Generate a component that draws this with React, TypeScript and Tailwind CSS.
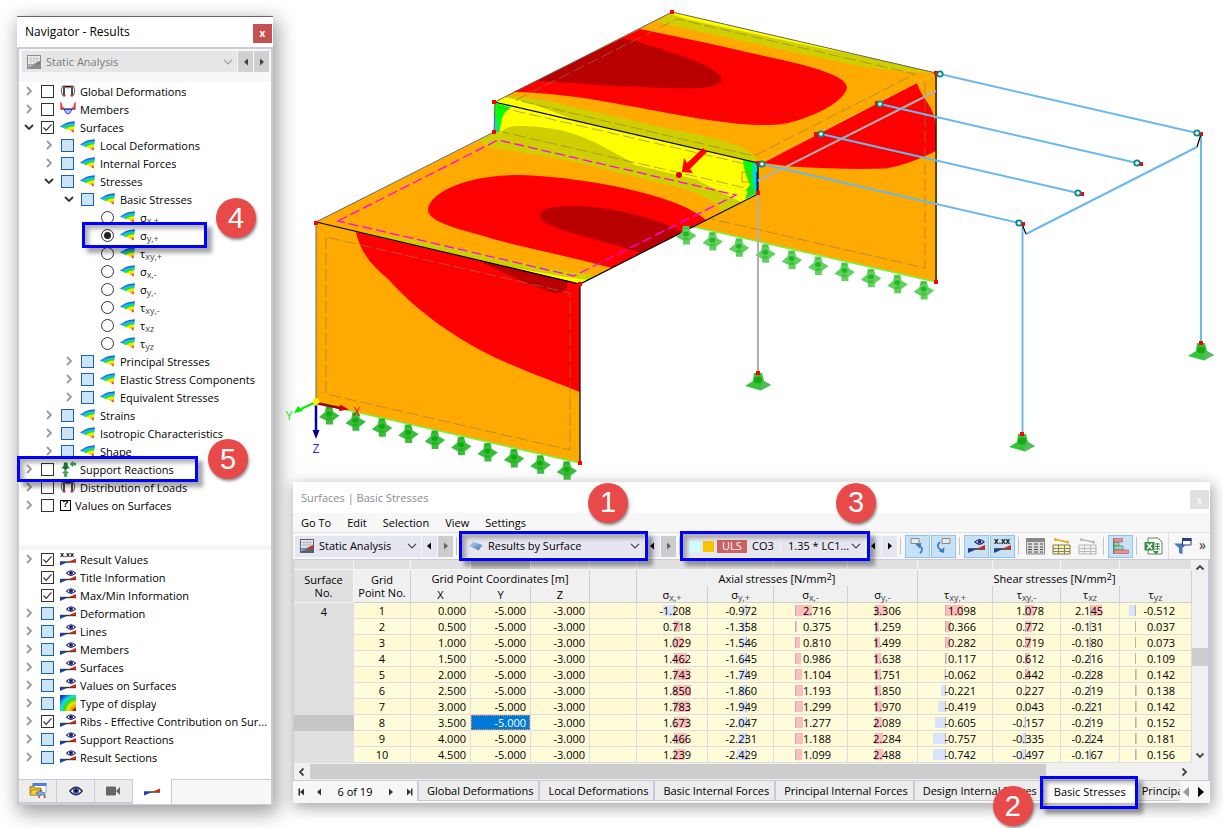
import React from "react";

type Glyph =
  | "frame"
  | "moment"
  | "surface"
  | "support"
  | "question"
  | "values"
  | "eye"
  | "contour";

interface TreeItem {
  id: string;
  label: React.ReactNode;
  depth: number;
  glyph: Glyph;
  control: "empty" | "checked" | "mixed" | "radio" | "radio-on";
  expander?: "open" | "closed";
  callout?: React.ReactNode;
}

const INDENT = ["pl-0", "pl-5", "pl-10", "pl-15"];

function Sym({ base, sub }: { base: string; sub: string }) {
  return (
    <span>
      {base}
      <span className="relative top-0.5 text-[9px] leading-none text-[#444]">{sub}</span>
    </span>
  );
}

function Badge({ n, className }: { n: number; className: string }) {
  return (
    <span
      className={`pointer-events-none absolute z-20 flex size-10 items-center justify-center rounded-full bg-[#e84a4a] font-['Liberation_Sans',sans-serif] text-[29px] leading-none text-white shadow-[1px_2px_3px_rgba(0,0,0,0.45)] ${className}`}
    >
      {n}
    </span>
  );
}

function Highlight({ className }: { className: string }) {
  return (
    <span
      className={`pointer-events-none absolute z-10 border-3 border-[#0000ff] shadow-[5px_5px_4px_rgba(0,0,0,0.35),inset_4px_4px_4px_rgba(0,0,0,0.3)] ${className}`}
    />
  );
}

function Defs() {
  return (
    <svg className="absolute size-0" aria-hidden="true">
      <defs>
        <radialGradient
          id="wedge"
          gradientUnits="userSpaceOnUse"
          cx="0"
          cy="0"
          r="11"
          gradientTransform="translate(14 13) scale(1.700 1)"
        >
          <stop offset="0.08" stopColor="#d01000" />
          <stop offset="0.18" stopColor="#ff9000" />
          <stop offset="0.32" stopColor="#ffe800" />
          <stop offset="0.46" stopColor="#e0f000" />
          <stop offset="0.56" stopColor="#20dc30" />
          <stop offset="0.72" stopColor="#10c8f0" />
          <stop offset="0.84" stopColor="#1088e8" />
          <stop offset="0.96" stopColor="#1020a8" />
        </radialGradient>
        <radialGradient id="iso" gradientUnits="userSpaceOnUse" cx="16" cy="16" r="20">
          <stop offset="0.1" stopColor="#c01000" />
          <stop offset="0.22" stopColor="#f0a000" />
          <stop offset="0.42" stopColor="#f0e800" />
          <stop offset="0.58" stopColor="#30d820" />
          <stop offset="0.76" stopColor="#10e0f0" />
          <stop offset="1" stopColor="#1040c0" />
        </radialGradient>
        <linearGradient id="slab" x1="0" y1="0" x2="1" y2="1">
          <stop offset="0" stopColor="#b8dcf4" />
          <stop offset="1" stopColor="#3c74b0" />
        </linearGradient>
      </defs>
    </svg>
  );
}

function DiagramLine({ y }: { y: number }) {
  return (
    <g>
      <path d={`M0 ${y}h16`} stroke="#333" strokeWidth="1.4" />
      <path d={`M0 ${y}h8l-8 3.5z`} fill="#1c3fa8" />
      <path d={`M16 ${y}h-8l8-3.5z`} fill="#d42a14" />
    </g>
  );
}

function Eye() {
  return (
    <g>
      <path d="M6.500 4.200q4.500-4.800 9 0q-4.500 4.200-9 0z" fill="#fff" stroke="#232a66" strokeWidth="1.100" />
      <circle cx="11" cy="4" r="2.100" fill="#2b3590" />
      <circle cx="11" cy="3.800" r="0.800" fill="#0a0a20" />
    </g>
  );
}

function TreeGlyph({ kind }: { kind: Glyph }) {
  if (kind === "question") {
    return (
      <span className="flex size-[11px] shrink-0 items-center justify-center border border-black bg-white font-['Liberation_Mono',monospace] text-[10px] leading-none font-bold">
        ?
      </span>
    );
  }
  return (
    <svg width="16" height="16" viewBox="0 0 16 16" className="shrink-0" fill="none" aria-hidden="true">
      {kind === "surface" && <path d="M0 7.500 6 4q4-1.800 9-1.500L13.500 13.500l-3-2-5-1.500z" fill="url(#wedge)" />}
      {kind === "frame" && (
        <>
          <path d="M4 12.500V3.500h8v9" stroke="#111" strokeWidth="1.500" />
          <path d="M4 4q4 2 8 0" stroke="#777" />
          <path d="M2.500 3Q0 7.500 2.500 12.500M13.500 3q2.500 4.500 0 9.500" stroke="#555" />
          <path d="M3 11.500h2.500v2H3zM10.500 11.500H13v2h-2.500zM3 2.500h2v2H3zM11 2.500h2v2h-2z" fill="#d23030" />
        </>
      )}
      {kind === "moment" && (
        <>
          <path d="M0.500 8h15" stroke="#555" strokeWidth="1.500" />
          <path d="M4 8.500q4 9 8 0z" fill="#b8c4ff" stroke="#2c3cff" />
          <path d="M0.800 7.500V1.500q1 4.500 3.200 6zM15.200 7.500V1.500q-1 4.500-3.200 6z" fill="#ff6060" stroke="#f02020" strokeWidth="0.800" />
        </>
      )}
      {kind === "support" && (
        <>
          <path d="M4 1.500h3.500L8 5l2 2.500H1L3.500 5z" fill="#1d7a3a" />
          <circle cx="5.500" cy="7.500" r="1.500" fill="#1f5f30" />
          <path d="m5.500 9 3 3H6.800v3.500H4.300V12H2.500z" fill="#35b04c" stroke="#1d7a3a" strokeWidth="0.500" />
          <path d="m10 3 2.800-2.500V2H16v2h-3.200v1.500z" fill="#35b04c" stroke="#1d7a3a" strokeWidth="0.500" />
        </>
      )}
      {kind === "contour" && <path d="M0 0h16v16H0z" fill="url(#iso)" />}
      {kind === "eye" && (
        <>
          <DiagramLine y={10.5} />
          <Eye />
        </>
      )}
      {kind === "values" && (
        <>
          <DiagramLine y={11} />
          <text x="0" y="6" fontSize="7" fontWeight="700" fill="#222" fontFamily="Open Sans, sans-serif">
            x.xx
          </text>
        </>
      )}
    </svg>
  );
}

const BOX =
  "peer block size-[13px] appearance-none border border-[#333] bg-white";
const MIXED_BOX =
  "peer block size-[13px] appearance-none border border-[#1c62a8] bg-[#cce4f7]";

function TreeRow({ item }: { item: TreeItem }) {
  const isRadio = item.control === "radio" || item.control === "radio-on";
  return (
    <li className={`relative flex h-[18px] items-center ${INDENT[item.depth]}`}>
      <span className="flex w-[21px] shrink-0 pl-1">
        {item.expander && (
          <button type="button" aria-label="Toggle" className="flex size-[10px] items-center justify-center">
            <svg width="10" height="10" viewBox="0 0 10 10" fill="none" aria-hidden="true">
              {item.expander === "open" ? (
                <path d="m1 3 4 4 4-4" stroke="#333" strokeWidth="1.800" />
              ) : (
                <path d="m3 1 4 4-4 4" stroke="#9a9a9a" strokeWidth="1.800" />
              )}
            </svg>
          </button>
        )}
      </span>
      <span className="relative mr-1.5 block shrink-0">
        {isRadio ? (
          <>
            <input
              id={item.id}
              type="radio"
              name="basic-stress"
              defaultChecked={item.control === "radio-on"}
              className="peer block size-[13px] appearance-none rounded-full border border-[#333] bg-white"
            />
            <span className="pointer-events-none absolute inset-[3px] hidden rounded-full bg-[#222] peer-checked:block" />
          </>
        ) : (
          <>
            <input
              id={item.id}
              type="checkbox"
              defaultChecked={item.control === "checked"}
              className={item.control === "mixed" ? MIXED_BOX : BOX}
            />
            <svg
              viewBox="0 0 13 13"
              fill="none"
              aria-hidden="true"
              className="pointer-events-none absolute inset-0 hidden size-[13px] peer-checked:block"
            >
              <path d="m2.500 6.500 2.700 2.800 5.300-6" stroke="#333" strokeWidth="1.200" />
            </svg>
          </>
        )}
      </span>
      <TreeGlyph kind={item.glyph} />
      <label htmlFor={item.id} className="ml-1 truncate pt-0.5">
        {item.label}
      </label>
      {item.callout}
    </li>
  );
}

const RESULT_TREE: TreeItem[] = [
  { id: "gd", label: "Global Deformations", depth: 0, glyph: "frame", control: "empty", expander: "closed" },
  { id: "mem", label: "Members", depth: 0, glyph: "moment", control: "empty", expander: "closed" },
  { id: "srf", label: "Surfaces", depth: 0, glyph: "surface", control: "checked", expander: "open" },
  { id: "ld", label: "Local Deformations", depth: 1, glyph: "surface", control: "mixed", expander: "closed" },
  { id: "if", label: "Internal Forces", depth: 1, glyph: "surface", control: "mixed", expander: "closed" },
  { id: "st", label: "Stresses", depth: 1, glyph: "surface", control: "mixed", expander: "open" },
  { id: "bs", label: "Basic Stresses", depth: 2, glyph: "surface", control: "mixed", expander: "open" },
  { id: "sxp", label: <Sym base="σ" sub="x,+" />, depth: 3, glyph: "surface", control: "radio" },
  {
    id: "syp",
    label: <Sym base="σ" sub="y,+" />,
    depth: 3,
    glyph: "surface",
    control: "radio-on",
    callout: (
      <>
        <Highlight className="-top-1 left-[62px] h-[26px] w-[125px]" />
        <Badge n={4} className="-top-7 left-49" />
      </>
    ),
  },
  { id: "txyp", label: <Sym base="τ" sub="xy,+" />, depth: 3, glyph: "surface", control: "radio" },
  { id: "sxm", label: <Sym base="σ" sub="x,-" />, depth: 3, glyph: "surface", control: "radio" },
  { id: "sym", label: <Sym base="σ" sub="y,-" />, depth: 3, glyph: "surface", control: "radio" },
  { id: "txym", label: <Sym base="τ" sub="xy,-" />, depth: 3, glyph: "surface", control: "radio" },
  { id: "txz", label: <Sym base="τ" sub="xz" />, depth: 3, glyph: "surface", control: "radio" },
  { id: "tyz", label: <Sym base="τ" sub="yz" />, depth: 3, glyph: "surface", control: "radio" },
  { id: "ps", label: "Principal Stresses", depth: 2, glyph: "surface", control: "mixed", expander: "closed" },
  { id: "esc", label: "Elastic Stress Components", depth: 2, glyph: "surface", control: "mixed", expander: "closed" },
  { id: "es", label: "Equivalent Stresses", depth: 2, glyph: "surface", control: "mixed", expander: "closed" },
  { id: "str", label: "Strains", depth: 1, glyph: "surface", control: "mixed", expander: "closed" },
  { id: "iso-c", label: "Isotropic Characteristics", depth: 1, glyph: "surface", control: "mixed", expander: "closed" },
  { id: "shp", label: "Shape", depth: 1, glyph: "surface", control: "mixed", expander: "closed" },
  {
    id: "sr",
    label: "Support Reactions",
    depth: 0,
    glyph: "support",
    control: "empty",
    expander: "closed",
    callout: (
      <>
        <Highlight className="-top-1 -left-[3px] h-[26px] w-[181px]" />
        <Badge n={5} className="-top-[21px] left-47" />
      </>
    ),
  },
  { id: "dl", label: "Distribution of Loads", depth: 0, glyph: "frame", control: "empty", expander: "closed" },
  { id: "vs", label: "Values on Surfaces", depth: 0, glyph: "question", control: "empty", expander: "closed" },
];

const DISPLAY_TREE: TreeItem[] = [
  { id: "d-rv", label: "Result Values", depth: 0, glyph: "values", control: "checked", expander: "closed" },
  { id: "d-ti", label: "Title Information", depth: 0, glyph: "eye", control: "checked" },
  { id: "d-mm", label: "Max/Min Information", depth: 0, glyph: "eye", control: "checked" },
  { id: "d-df", label: "Deformation", depth: 0, glyph: "eye", control: "mixed", expander: "closed" },
  { id: "d-ln", label: "Lines", depth: 0, glyph: "eye", control: "mixed", expander: "closed" },
  { id: "d-mb", label: "Members", depth: 0, glyph: "eye", control: "mixed", expander: "closed" },
  { id: "d-sf", label: "Surfaces", depth: 0, glyph: "eye", control: "mixed", expander: "closed" },
  { id: "d-vs", label: "Values on Surfaces", depth: 0, glyph: "eye", control: "mixed", expander: "closed" },
  { id: "d-td", label: "Type of display", depth: 0, glyph: "contour", control: "mixed", expander: "closed" },
  { id: "d-rb", label: "Ribs - Effective Contribution on Sur...", depth: 0, glyph: "eye", control: "checked", expander: "closed" },
  { id: "d-sr", label: "Support Reactions", depth: 0, glyph: "eye", control: "mixed", expander: "closed" },
  { id: "d-rs", label: "Result Sections", depth: 0, glyph: "eye", control: "mixed", expander: "closed" },
];

function Triangle({ dir, bar, size = 8 }: { dir: "left" | "right"; bar?: boolean; size?: number }) {
  return (
    <svg
      width={size}
      height={size}
      viewBox="0 0 8 8"
      fill="currentColor"
      aria-hidden="true"
      className={dir === "left" ? "rotate-180" : undefined}
    >
      <path d="M2 0.500v7L6 4z" />
      {bar && <path d="M6 0.500h1.500v7H6z" />}
    </svg>
  );
}

function ChevronDown({ className }: { className: string }) {
  return (
    <svg width="10" height="6" viewBox="0 0 10 6" fill="none" aria-hidden="true" className={className}>
      <path d="m1 0.800 4 4 4-4" stroke="currentColor" strokeWidth="1.200" />
    </svg>
  );
}

function AnalysisIcon({ muted }: { muted?: boolean }) {
  return (
    <svg width="14" height="14" viewBox="0 0 14 14" aria-hidden="true" className="shrink-0">
      <path d="M0 0h14v14H0z" fill={muted ? "#8c8c8c" : "#5c6070"} />
      <path d="M1 1h12v8H1z" fill="#f0f0f0" />
      <path d="M1 3.500h12M1 6h12M4 1v8M7 1v8M10 1v8" stroke={muted ? "#b8b8b8" : "#a0a4b4"} strokeWidth="0.700" />
      <path d="M13 9.500H6L13 6z" fill={muted ? "#777" : "#d42a14"} />
      <path d="M1 9.500h7L1 12.500z" fill={muted ? "#bbb" : "#7fa0e8"} />
    </svg>
  );
}

function Navigator() {
  return (
    <aside className="mt-4 ml-[17px] w-64 shrink-0 border-t border-[#666] bg-white shadow-[3px_6px_18px_2px_rgba(0,0,0,0.38)]">
      <header className="flex h-[30px] items-center justify-between pr-px pl-2">
        <h2 className="text-[12px]">Navigator - Results</h2>
        <button
          type="button"
          aria-label="Close"
          className="mt-0.5 flex size-[19px] items-center justify-center bg-[#c75050] text-[10px] leading-none font-bold text-white"
        >
          x
        </button>
      </header>
      <div className="border-2 border-b-0 border-[#cbcbd8]">
        <div className="flex h-[33px] items-start gap-px bg-[#f7f7f7] pt-0.5 pr-0.5 pl-[3px]">
          <div className="flex h-[21px] flex-1 items-center bg-[#e6e6e6] pr-1 pl-[5px] text-[#7a7a7a]">
            <AnalysisIcon muted />
            <select
              aria-label="Analysis type"
              disabled
              className="ml-[5px] min-w-0 flex-1 appearance-none text-[#7a7a7a] opacity-100"
            >
              <option>Static Analysis</option>
            </select>
            <ChevronDown className="text-[#a0a0a0]" />
          </div>
          <button type="button" aria-label="Previous" className="flex h-[21px] w-[15px] items-center justify-center bg-[#d0d0d0] text-[#444]">
            <Triangle dir="left" />
          </button>
          <button type="button" aria-label="Next" className="flex h-[21px] w-[15px] items-center justify-center bg-[#d0d0d0] text-[#444]">
            <Triangle dir="right" />
          </button>
        </div>
        <ul className="pb-[31px] pl-px">
          {RESULT_TREE.map((item) => (
            <TreeRow key={item.id} item={item} />
          ))}
        </ul>
        <div className="h-[5px] bg-[#f5f5f5]" />
        <ul className="pb-[13px] pl-px">
          {DISPLAY_TREE.map((item) => (
            <TreeRow key={item.id} item={item} />
          ))}
        </ul>
      </div>
      <div className="flex h-[26px] border-x-2 border-b border-[#cbcbd8] bg-[#f7f7f7]">
        <button type="button" aria-label="Data" className="flex w-[38px] items-center justify-center border-t border-r border-b-2 border-[#cbcbd8] bg-[#ececec]">
          <svg width="18" height="16" viewBox="0 0 18 16" aria-hidden="true">
            <path d="M4 0.500h13v9H4z" fill="#fff" stroke="#9aa8c8" />
            <path d="M3.500 0h14v3h-14z" fill="#4a82d8" />
            <path d="M1 3.500h4l1 1.500h6v7H1z" fill="#e8b820" stroke="#8a6a10" strokeWidth="0.800" />
            <path d="M3 7h10l-2 5H1z" fill="#f8cc40" stroke="#a88010" strokeWidth="0.600" />
            <path d="m7 10 4.500-2.500L16 11v3l-3-2.500-3 2z" fill="#70a8e0" stroke="#3a5a80" strokeWidth="0.600" />
            <path d="M11 7h1.500v1.500H11zM15 13.500h1.500V15H15zM9.500 13.500H11V15H9.500z" fill="#d42a14" />
          </svg>
        </button>
        <button type="button" aria-label="Display" className="flex w-[38px] items-center justify-center border-t border-r border-b-2 border-[#cbcbd8] bg-[#ececec]">
          <svg width="14" height="10" viewBox="0 0 14 10" fill="none" aria-hidden="true">
            <path d="M0.800 5q6.200-7.500 12.400 0q-6.200 7.500-12.400 0z" fill="#fff" stroke="#232a66" strokeWidth="1.300" />
            <circle cx="7" cy="4.800" r="3" fill="#3a4a98" />
            <circle cx="7" cy="4.800" r="1.400" fill="#0a0a28" />
          </svg>
        </button>
        <button type="button" aria-label="Views" className="flex w-[38px] items-center justify-center border-t border-r border-b-2 border-[#cbcbd8] bg-[#ececec]">
          <svg width="15" height="10" viewBox="0 0 15 10" fill="#666" aria-hidden="true">
            <rect x="0" y="0.500" width="10" height="9" rx="1" />
            <path d="m10.500 4.500 3.500-3.500v8l-3.500-3.500z" />
          </svg>
        </button>
        <button type="button" aria-label="Results" className="flex w-[39px] items-center justify-center border-r border-[#cbcbd8] bg-white">
          <svg width="16" height="16" viewBox="0 0 16 16" aria-hidden="true">
            <DiagramLine y={8} />
          </svg>
        </button>
        <div className="flex-1 border-t border-[#cbcbd8]" />
      </div>
    </aside>
  );
}

const LINE_SUPPORTS = Array.from({ length: 10 }, (_, i) => i);

function LineSupport({ x, y, fill, dark }: { x: number; y: number; fill: string; dark: string }) {
  return (
    <g transform={`translate(${x} ${y})`}>
      <path d="M-3-9h6l1.500 6 6 3.500L4 5.500v4h-7v-4L-10 2l6-5z" fill={fill} />
      <ellipse cx="0" cy="-1" rx="3" ry="2.500" fill={dark} />
      <path d="M-2.500-8h5v2h-5zM-2.500 2.500h5v3h-5z" fill={dark} opacity="0.500" />
    </g>
  );
}

function PointSupport({ x, y }: { x: number; y: number }) {
  return (
    <g transform={`translate(${x} ${y})`}>
      <path d="M-4 0h8l2 8 7 4-10 5.500L-13 13l8-5z" fill="#38c438" />
      <path d="M1 17 13 12 6 8z" fill="#58b868" />
      <ellipse cx="0" cy="7" rx="4" ry="3.500" fill="#18a818" />
      <path d="M-2-2h4v4h-4z" fill="#f00" />
    </g>
  );
}

const NODES = [
  [672, 12], [494, 102], [494, 132], [316, 223], [580, 284], [580, 463], [936, 282], [936, 73],
  [758, 193], [758, 163], [877, 103], [816, 134], [1201, 134], [1141, 164], [1082, 194], [1023, 224],
];

const RINGS = [
  [940, 74], [1197, 133], [880, 104], [1137, 163], [821, 134], [1078, 193], [762, 164], [1019, 223],
];

function ModelView() {
  return (
    <svg viewBox="273 0 950 482" className="block w-full" fill="none" role="img" aria-label="Stress model">
      {/* rear wall */}
      <path d="M758 163 937 73v209L690 226l68-32z" fill="#fa0" />
      <path d="M763 163 917 83C922 100 936 106 936 130v21q-28 14-50 17.500-40 1.500-96-2z" fill="#f00" />
      <path d="M690 226 936 282" stroke="#7cf03c" strokeWidth="1.500" />

      {/* upper roof */}
      <path d="m672 12 265 61-179 90-264-61z" fill="#fa0" />
      <path d="m672 12 265 61q-60-2-97-11-67-14-133-29-30-6-50-11z" fill="#cfcf00" />
      <path d="m672 12 200 46q-50-9-99-20l-83-18-20-6z" fill="#ff0" />
      <path d="M640 29 707 43 773 58C820 68 847 77 847 88 844 100 822 112 807 117 790 124 780 125 760 125 720 124 680 115 613 103 575 96 540 92 513 92z" fill="#f00" />
      <path d="M623 38C660 48 722 66 722 80 718 90 690 89 640 87 600 86 570 82 537 81z" fill="#b80000" />
      <path d="M495 102q8-6 20-5 30 2 50 8l95 22q60 11 80 20 18 8 18 16z" fill="#cfcf00" />
      <path d="m495 102 9-5q25 4 70 23z" fill="#ff0" />

      {/* step */}
      <path d="m494 102 264 61v31l-264-62z" fill="#ff0" />
      <path d="M502 133C503 126 515 125 540 127 580 131 602 146 633 163v2L502 135z" fill="#cfcf00" />
      <path d="m495 103 16 4q-8 6-9 12l-3 14-5-1z" fill="#0f0" />
      <path d="m494 112 3 8 1 13-4-1z" fill="#2cc" />
      <path d="m743 160 15 3v31l-17 2 9-11q-6-12-7-25z" fill="#0f0" />
      <path d="m753 163 5 1v29h-3q-4-14-2-30z" fill="#00d8d8" />
      <path d="M756 172h2v20h-2z" fill="#0060ff" />

      {/* lower roof */}
      <path d="m316 222 179-90 263 62-178 90z" fill="#fa0" />
      <path d="m479 140 16-8 263 62-36 18q-4-9-20-16-16-8-42-13l-80-20q-40-8-92-16z" fill="#cfcf00" />
      <path d="m630 164 65 15 46 23 17-8z" fill="#ff0" />
      <path d="m750 185 8 8-13 6z" fill="#20e020" />
      <path d="M428 210C428 195 460 175 520 175 580 177 640 190 667 200 685 206 698 213 706 220L612 268C560 254 510 245 480 235 450 227 428 220 428 210z" fill="#f00" />
      <path d="M540 215C541 207 560 206 580 206 620 208 660 220 682 232L641 253C610 243 580 236 560 229 548 225 539 220 540 215z" fill="#b80000" />
      <path d="m350 230 83 13 114 25 50 8-17 8z" fill="#cfcf00" />
      <path d="m510 267 50 9 28 4-8 4z" fill="#ff0" />

      {/* front wall */}
      <path d="m316 222 264 62v179l-264-60z" fill="#fa0" />
      <path d="M356 232C362 258 376 268 389 280 420 314 450 333 480 350 515 368 550 380 580 392V284z" fill="#f00" />
      <path d="M478 260C500 272 525 283 545 290 558 295 566 294 567 286l1-5z" fill="#b80000" />
      <path d="m316 403 264 60" stroke="#7cf03c" strokeWidth="1.500" />

      {/* edges */}
      <path d="m494 132 1-30L672 12l264 61M316 222l178-90M316 222v181" stroke="#666" />
      <path d="m494 102 264 61v31L580 284 316 222M936 73v209M580 284v179" stroke="#000" strokeWidth="1.200" />

      {/* inner offset outlines */}
      <g stroke="#8c7c5c" strokeDasharray="12 4" strokeWidth="0.800" opacity="0.800">
        <path d="M516 100 677 19l238 55-161 82zM498 107l252 58M498 131l252 58" />
        <path d="M326 237v157l244 56V293zM925 83v185l-213-49" />
      </g>
      <path d="m338 221 160-81 238 55-162 81z" stroke="#f0f" strokeDasharray="10 4" strokeWidth="1.300" />

      {LINE_SUPPORTS.map((i) => (
        <LineSupport key={`f${i}`} x={329 + i * 26.4} y={415 + i * 6.15} fill="#3cbc3c" dark="#0cae0c" />
      ))}
      {LINE_SUPPORTS.map((i) => (
        <LineSupport key={`r${i}`} x={686 + i * 26.4} y={235 + i * 6.1} fill="#60d060" dark="#20b820" />
      ))}

      {/* members */}
      <path d="M936 91 758 181M758 194v180" stroke="#b0b0b0" strokeWidth="2" />
      <path
        d="m940 74 257 59M880 104l257 59M821 134l257 59M762 164l257 59M1201 134v210M1022.500 224v210M1197 147l-171 87"
        stroke="#6ab9ec"
        strokeWidth="2"
      />
      <path d="m1201 134-4 13M1022 224l4 10" stroke="#000" strokeWidth="1.200" />

      <PointSupport x={758} y={373} />
      <PointSupport x={1201} y={343} />
      <PointSupport x={1022} y={434} />
      {NODES.map(([x, y]) => (
        <rect key={`${x}-${y}`} x={x - 2} y={y - 2} width="4" height="4" fill="#f00" />
      ))}
      {RINGS.map(([x, y]) => (
        <circle key={`${x}-${y}`} cx={x} cy={y} r="2.700" fill="#fff" stroke="#068888" strokeWidth="1.800" />
      ))}

      {/* picked point */}
      <path d="m703 148 4 4-17 17 3 4-11-1 2-14 3 5z" fill="#f00" />
      <circle cx="679" cy="175" r="3" fill="#e00000" />
      <path d="M742 172h8v10h-8z" stroke="#c09000" />

      {/* axes */}
      <path d="m316 403 24 5" stroke="#900" strokeWidth="2.500" />
      <path d="m340 404.500 9 5-10 1.500z" fill="#c00" />
      <path d="m316 402-15 7" stroke="#0e0" strokeWidth="2" />
      <path d="m294 413 4-7 5 5z" fill="#0e0" />
      <path d="M316 403v30" stroke="#00b" strokeWidth="2.500" />
      <path d="M312.500 430h7l-3.500 9z" fill="#009" />
      <path d="m313 399 5-1 2 4-4 4-3-3z" fill="#fe0" />
      <g fontSize="12" fontFamily="Open Sans, sans-serif" textAnchor="middle">
        <text x="357" y="416" fill="#f00">X</text>
        <text x="289" y="420" fill="#0e0">Y</text>
        <text x="316" y="453" fill="#22f">Z</text>
      </g>
    </svg>
  );
}

function StepButtons({ nextOff }: { nextOff?: boolean }) {
  return (
    <>
      <button type="button" aria-label="Previous" className="flex h-[21px] w-[15px] items-center justify-center bg-[#e6e6f0] pr-0.5 text-black">
        <Triangle dir="left" />
      </button>
      <button
        type="button"
        aria-label="Next"
        className={
          nextOff
            ? "flex h-[21px] w-[15px] items-center justify-center bg-[#cdcdcd] text-[#666]"
            : "flex h-[21px] w-[15px] items-center justify-center bg-[#e6e6f0] text-black"
        }
      >
        <Triangle dir="right" />
      </button>
    </>
  );
}

function Sep() {
  return <span className="mr-1 ml-[3px] h-[18px] w-px shrink-0 bg-[#c4c4c4]" />;
}

function ToolButton({ label, active, children }: { label: string; active?: boolean; children: React.ReactNode }) {
  return (
    <button
      type="button"
      aria-label={label}
      aria-pressed={active}
      className={
        active
          ? "flex h-[23px] w-[25px] shrink-0 items-center justify-center border border-[#92c4ee] bg-[#c7e2f7]"
          : "flex h-[23px] w-[25px] shrink-0 items-center justify-center"
      }
    >
      <svg width="19" height="18" viewBox="0 0 19 18" fill="none" aria-hidden="true">
        {children}
      </svg>
    </button>
  );
}

function Grid({ fill, stroke, y }: { fill: string; stroke: string; y: number }) {
  return (
    <>
      <path d={`M1 ${y}h17V17H1z`} fill={fill} stroke={stroke} />
      <path d={`M1 ${y + 3.5}h17M1 ${y + 6.5}h17M6.500 ${y}V17M12.500 ${y}V17`} stroke={stroke} strokeWidth="0.900" />
    </>
  );
}

function Toolbar() {
  return (
    <div className="flex h-[27px] items-center border-t border-[#e2e2e2] bg-[#f7f7f7] pl-0.5">
      <div className="flex shrink-0 gap-px">
        <div className="flex h-[21px] w-[126px] items-center bg-[#e6e6f0] pr-1 pl-[5px]">
          <AnalysisIcon />
          <select aria-label="Analysis type" className="ml-[5px] min-w-0 flex-1 appearance-none">
            <option>Static Analysis</option>
          </select>
          <ChevronDown className="text-[#444]" />
        </div>
        <StepButtons nextOff />
      </div>
      <Sep />
      <div className="relative flex shrink-0 gap-px">
        <div className="flex h-[21px] w-[183px] items-center bg-[#e6e6f0] pr-1 pl-2">
          <svg width="14" height="10" viewBox="0 0 14 10" aria-hidden="true" className="shrink-0">
            <path d="m4 0.500 9.500 3.500-4 5.500L0.500 5z" fill="url(#slab)" />
          </svg>
          <select aria-label="Results by" className="ml-[5px] min-w-0 flex-1 appearance-none">
            <option>Results by Surface</option>
          </select>
          <ChevronDown className="text-[#444]" />
        </div>
        <StepButtons nextOff />
        <Highlight className="-top-[5px] -left-0.5 h-[30px] w-[189px]" />
        <Badge n={1} className="-top-[53px] left-[127px]" />
      </div>
      <Sep />
      <div className="relative flex shrink-0 gap-px">
        <div className="flex h-[21px] w-[181px] items-center bg-[#e6e6f0] pr-1 pl-[5px]">
          <span className="size-[11px] shrink-0 bg-[#ccffff]" />
          <span className="ml-[3px] size-[11px] shrink-0 bg-[#f8c300]" />
          <span className="ml-[3px] flex h-[13px] w-[30px] shrink-0 items-center justify-center bg-[#cc6262] text-white">ULS</span>
          <span className="ml-[5px] w-[29px] shrink-0 border-r border-[#f4f4f8] leading-4">CO3</span>
          <select aria-label="Load combination" className="ml-[7px] min-w-0 flex-1 appearance-none">
            <option>1.35 * LC1...</option>
          </select>
          <ChevronDown className="text-[#444]" />
        </div>
        <StepButtons />
        <Highlight className="-top-[5px] -left-1 h-[30px] w-[190px]" />
        <Badge n={3} className="-top-[53px] left-[152px]" />
      </div>
      <Sep />
      <div className="flex gap-px">
        <ToolButton label="Select in graphic" active>
          <path d="M3 1.500h8v5H3z" fill="#e4e8ee" stroke="#888" />
          <path d="M12 16.500q5-5.500-2-8.500" stroke="#3a7cc0" strokeWidth="1.800" />
          <path d="m7.500 7 6-1-2 5.500z" fill="#3a7cc0" />
        </ToolButton>
        <ToolButton label="Select in table" active>
          <path d="M8 1.500h8v5H8z" fill="#e4e8ee" stroke="#888" />
          <path d="M6 5q-5 4.500 1.500 8.500" stroke="#3a7cc0" strokeWidth="1.800" />
          <path d="m10.500 10-0.500 6-5-1.500z" fill="#3a7cc0" />
        </ToolButton>
      </div>
      <Sep />
      <div className="flex gap-px">
        <ToolButton label="Show results" active>
          <path d="M1 12h17" stroke="#333" strokeWidth="1.500" />
          <path d="M1 12h9L1 16z" fill="#1c3fa8" />
          <path d="M18 12H9l9-4z" fill="#d42a14" />
          <path d="M8 5q4.500-5 9 0-4.500 4.500-9 0z" fill="#fff" stroke="#232a66" strokeWidth="1.200" />
          <circle cx="12.500" cy="4.800" r="2" fill="#232a80" />
        </ToolButton>
        <ToolButton label="Show values" active>
          <path d="M1 12h17" stroke="#333" strokeWidth="1.500" />
          <path d="M1 12h9L1 16z" fill="#1c3fa8" />
          <path d="M18 12H9l9-4z" fill="#d42a14" />
          <text x="1" y="7" fontSize="8" fontWeight="700" fill="#222" fontFamily="Open Sans, sans-serif">
            x.xx
          </text>
        </ToolButton>
      </div>
      <Sep />
      <div className="flex gap-px">
        <ToolButton label="Table">
          <path d="M0.500 1.500h18V17H0.500z" fill="#ddd" stroke="#888" />
          <path d="M0.500 1.500h18V5H0.500z" fill="#888" />
          <path d="M2 7h4M8 7h4M14 7h3M2 10h4M8 10h4M14 10h3M2 12.500h4M8 12.500h4M14 12.500h3M2 15h4M8 15h4M14 15h3" stroke="#444" />
        </ToolButton>
        <ToolButton label="Member rows">
          <Grid fill="#fff59a" stroke="#777" y={8} />
          <path d="M3.500 2.500 15 5" stroke="#e0b000" strokeWidth="1.400" />
          <circle cx="3.500" cy="2.500" r="1.500" fill="#e0b000" />
          <circle cx="15.500" cy="5" r="1.500" fill="#e0b000" />
        </ToolButton>
        <ToolButton label="Selected rows">
          <Grid fill="#f4f4f4" stroke="#b4b4b4" y={8} />
          <path d="M3.500 2.500 15 5" stroke="#b8b8b8" strokeWidth="1.400" />
          <circle cx="3.500" cy="2.500" r="1.500" fill="#b8b8b8" />
          <circle cx="15.500" cy="5" r="1.500" fill="#b8b8b8" />
        </ToolButton>
      </div>
      <Sep />
      <ToolButton label="Value bars" active>
        <path d="M2.500 1v16" stroke="#777" />
        <path d="M3 1.500h8.500V5H3zM3 13h14.500v3.500H3z" fill="#e89090" stroke="#c06060" strokeWidth="0.700" />
        <path d="M3 5.500h5v3H3zM3 9h9v3.500H3z" fill="#a8d0b8" stroke="#408868" strokeWidth="0.700" />
      </ToolButton>
      <Sep />
      <ToolButton label="Export to spreadsheet">
        <path d="M4 1h10l4 4v12H4z" fill="#fff" stroke="#5a8a5a" />
        <path d="M0.500 5h10v8.500H0.500z" fill="#3c8a4a" />
        <path d="m3 6.500 5 5.500M8 6.500 3 12" stroke="#fff" strokeWidth="1.400" />
        <path d="M11 7h5M11 9.500h5M11 12h5M13.500 6v7" stroke="#3c8a4a" />
        <path d="M9 14h6l-3 3.500z" fill="#3c8a4a" />
      </ToolButton>
      <div className="ml-0.5 flex h-full flex-1 items-center border-l border-[#dcdcdc] pl-px">
        <ToolButton label="Filter">
          <path d="M1 6.500h13L9.500 11v6L6 16v-5z" fill="#4a7ab8" />
          <path d="M9.500 1.500h8.500V8H9.500z" fill="#fff" stroke="#26366e" />
          <path d="M9 1h9.500v3H9z" fill="#2a3c90" />
        </ToolButton>
        <button type="button" aria-label="More" className="ml-1 pb-0.5 text-[14px] leading-none text-[#333]">
          »
        </button>
      </div>
    </div>
  );
}

// zero = distance of the bar's zero line from the cell's left edge
const RESULT_COLUMNS = [
  { base: "σ", sub: "x,+", zero: 37, scale: 9, values: [-1.208, 0.718, 1.029, 1.462, 1.743, 1.85, 1.783, 1.673, 1.466, 1.239] },
  { base: "σ", sub: "y,+", zero: 38, scale: 3.8, values: [-0.972, -1.358, -1.546, -1.645, -1.749, -1.86, -1.949, -2.047, -2.231, -2.429] },
  { base: "σ", sub: "x,-", zero: 21, scale: 6.4, values: [2.716, 0.375, 0.81, 0.986, 1.104, 1.193, 1.299, 1.277, 1.188, 1.099] },
  { base: "σ", sub: "y,-", zero: 27, scale: 3.4, values: [3.306, 1.259, 1.499, 1.638, 1.751, 1.85, 1.97, 2.089, 2.284, 2.488] },
  { base: "τ", sub: "xy,+", zero: 27, scale: 16.5, values: [1.098, 0.366, 0.282, 0.117, -0.062, -0.221, -0.419, -0.605, -0.757, -0.742] },
  { base: "τ", sub: "xy,-", zero: 32, scale: 8.8, values: [1.078, 0.772, 0.719, 0.612, 0.442, 0.227, 0.043, -0.157, -0.335, -0.497] },
  { base: "τ", sub: "xz", zero: 29, scale: 5.7, values: [2.145, -0.131, -0.18, -0.216, -0.228, -0.219, -0.221, -0.219, -0.224, -0.167] },
  { base: "τ", sub: "yz", zero: 15, scale: 12, values: [-0.512, 0.037, 0.073, 0.109, 0.142, 0.138, 0.142, 0.152, 0.181, 0.156] },
];

const CELL = "relative h-4 border-r border-b border-[#dcdce4] p-0 leading-[15px]";
const HEAD = "border-r border-[#cfcfcf] bg-[#f0f0f0] p-0 leading-[15px] font-normal";

function BarCell({ value, zero, scale }: { value: number; zero: number; scale: number }) {
  const width = Math.abs(value) * scale;
  return (
    <td className={`${CELL} pr-4 text-right`}>
      <span
        className={value < 0 ? "absolute top-0.5 h-[11px] bg-[#d8e4fc]" : "absolute top-0.5 h-[11px] bg-[#ffbcbc]"}
        style={{ left: value < 0 ? zero - width : zero, width }}
      />
      <span className="absolute top-0.5 h-[11px] w-px bg-[#b4b4b4]" style={{ left: zero }} />
      <span className="relative">{value.toFixed(3)}</span>
    </td>
  );
}

function StressTable() {
  return (
    <table className="w-full min-w-0 flex-1 table-fixed border-separate border-spacing-0">
      <colgroup>
        <col className="w-[60px]" />
        <col className="w-[57px]" />
        <col className="w-[60px]" />
        <col className="w-[60px]" />
        <col className="w-[59px]" />
        <col className="w-[47px]" />
        <col className="w-[71px]" />
        <col className="w-[66px]" />
        <col className="w-[74px]" />
        <col className="w-[70px]" />
        <col className="w-[75px]" />
        <col className="w-[68px]" />
        <col className="w-[59px]" />
        <col className="w-[72px]" />
      </colgroup>
      <thead>
        <tr>
          {Array.from({ length: 14 }, (_, i) => (
            <td
              key={i}
              className={
                i === 3
                  ? "h-[10px] border-r border-b border-[#f6f6f6] bg-[#c6c6c6] p-0"
                  : "h-[10px] border-r border-b border-[#f6f6f6] bg-[#e0e0e0] p-0"
              }
            />
          ))}
        </tr>
        <tr>
          <th rowSpan={2} className="border-r border-b border-[#f6f6f6] bg-[#e0e0e0] p-0 leading-[13px] font-normal">
            Surface
            <br />
            No.
          </th>
          <th rowSpan={2} className="border-r border-b border-[#cfcfcf] bg-[#f0f0f0] p-0 leading-[13px] font-normal">
            Grid
            <br />
            Point No.
          </th>
          <th colSpan={3} className={`${HEAD} h-4`}>Grid Point Coordinates [m]</th>
          <th rowSpan={2} className={`${HEAD} border-b`} />
          <th colSpan={4} className={`${HEAD} h-4`}>
            Axial stresses [N/mm<span className="relative -top-[3px] text-[9px] leading-none">2</span>]
          </th>
          <th colSpan={4} className={`${HEAD} h-4`}>
            Shear stresses [N/mm<span className="relative -top-[3px] text-[9px] leading-none">2</span>]
          </th>
        </tr>
        <tr>
          <th className={`${HEAD} h-[17px] border-b`}>X</th>
          <th className={`${HEAD} h-[17px] border-b`}>Y</th>
          <th className={`${HEAD} h-[17px] border-b`}>Z</th>
          {RESULT_COLUMNS.map((col) => (
            <th key={col.base + col.sub} className={`${HEAD} h-[17px] border-b`}>
              <Sym base={col.base} sub={col.sub} />
            </th>
          ))}
        </tr>
      </thead>
      <tbody>
        {RESULT_COLUMNS[0].values.map((_, row) => (
          <tr key={row} className={row % 2 ? "bg-[#fffcda]" : "bg-[#fff9d4]"}>
            <td className={row === 7 ? "bg-[#c6c6c6] p-0 text-center leading-[15px]" : "bg-[#e0e0e0] p-0 text-center leading-[15px]"}>
              {row === 0 ? "4" : ""}
            </td>
            <td className={`${CELL} text-center`}>{row + 1}</td>
            <td className={`${CELL} pr-1 text-right`}>{(row * 0.5).toFixed(3)}</td>
            <td className={`${CELL} pr-1 text-right`}>
              {row === 7 ? (
                <span className="-mr-1 block border border-dotted border-[#ff9a3c] bg-[#0078d7] pr-[3px] leading-[13px] text-white">
                  -5.000
                </span>
              ) : (
                "-5.000"
              )}
            </td>
            <td className={`${CELL} pr-1 text-right`}>-3.000</td>
            <td className={CELL} />
            {RESULT_COLUMNS.map((col) => (
              <BarCell key={col.base + col.sub} value={col.values[row]} zero={col.zero} scale={col.scale} />
            ))}
          </tr>
        ))}
      </tbody>
    </table>
  );
}

function ScrollArrow({ dir }: { dir: "up" | "down" | "left" | "right" }) {
  const paths = {
    up: "m1.500 6.500 3.500-3.500 3.500 3.500",
    down: "m1.500 3.500 3.500 3.500 3.500-3.500",
    left: "M6.500 1.500 3 5l3.500 3.500",
    right: "M3.500 1.500 7 5 3.500 8.500",
  };
  return (
    <button type="button" aria-label={`Scroll ${dir}`} className="flex size-4 shrink-0 items-center justify-center">
      <svg width="10" height="10" viewBox="0 0 10 10" fill="none" aria-hidden="true">
        <path d={paths[dir]} stroke="#444" strokeWidth="1.800" />
      </svg>
    </button>
  );
}

const TABS = [
  "Global Deformations",
  "Local Deformations",
  "Basic Internal Forces",
  "Principal Internal Forces",
  "Design Internal Forces",
];

function TabBar() {
  return (
    <div className="flex h-[23px] border-t border-[#cbcbd8] bg-[#f7f7f7] text-black">
      <div className="flex shrink-0 items-center text-[#333]">
        <button type="button" aria-label="First table" className="flex w-[17px] justify-center">
          <Triangle dir="left" bar />
        </button>
        <button type="button" aria-label="Previous table" className="flex w-[18px] justify-center">
          <Triangle dir="left" />
        </button>
        <span className="w-[54px] text-center text-black">6 of 19</span>
        <button type="button" aria-label="Next table" className="flex w-[18px] justify-center">
          <Triangle dir="right" />
        </button>
        <button type="button" aria-label="Last table" className="flex w-[17px] justify-center">
          <Triangle dir="right" bar />
        </button>
      </div>
      {TABS.map((tab) => (
        <button
          key={tab}
          type="button"
          className="h-5 shrink-0 border-b border-l-2 border-[#cbcbd8] bg-[#ececec] pr-[5px] pl-2"
        >
          {tab}
        </button>
      ))}
      <div className="relative flex shrink-0">
        <button type="button" className="mb-px border-x-2 border-[#cbcbd8] bg-white px-2.5">
          Basic Stresses
        </button>
        <Highlight className="-top-[5px] -left-0.5 h-[33px] w-[98px]" />
        <Badge n={2} className="top-[5px] -left-[49px]" />
      </div>
      <button
        type="button"
        className="h-5 min-w-0 flex-1 overflow-hidden border-b border-[#cbcbd8] bg-[#ececec] pl-1 text-left whitespace-nowrap"
      >
        Principal Stresses
      </button>
      <div className="flex shrink-0 items-center">
        <button type="button" aria-label="Scroll tabs left" className="flex w-3 justify-center text-[#999]">
          <Triangle dir="left" size={12} />
        </button>
        <button type="button" aria-label="Scroll tabs right" className="flex w-[18px] justify-center text-black">
          <Triangle dir="right" size={12} />
        </button>
      </div>
    </div>
  );
}

function ResultsPanel() {
  return (
    <section className="mr-[13px] ml-5 bg-white shadow-[2px_4px_14px_1px_rgba(0,0,0,0.35)]">
      <header className="flex h-[31px] items-center justify-between pr-px pl-2 text-[#8c8c8c]">
        <h2>Surfaces | Basic Stresses</h2>
        <button
          type="button"
          aria-label="Close"
          className="mt-1 flex size-[19px] items-center justify-center bg-[#e0e0e0] text-[10px] leading-none text-white"
        >
          x
        </button>
      </header>
      <nav className="flex h-[19px] items-center gap-4 bg-[#f7f7f7] pl-2">
        <button type="button">Go To</button>
        <button type="button">Edit</button>
        <button type="button">Selection</button>
        <button type="button">View</button>
        <button type="button">Settings</button>
      </nav>
      <Toolbar />
      <div className="border-t border-r-2 border-l border-[#cbcbd8] bg-[#f0f0f0]">
        <div className="flex">
          <StressTable />
          <div className="flex w-4 shrink-0 flex-col justify-between">
            <ScrollArrow dir="up" />
            <span className="mt-18 h-[18px] bg-[#cdcdcd]" />
            <span className="flex-1" />
            <ScrollArrow dir="down" />
          </div>
        </div>
        <div className="flex h-[17px] items-center pr-4">
          <ScrollArrow dir="left" />
          <span className="h-[15px] w-[82%] bg-[#cdcdcd]" />
          <span className="flex-1" />
          <ScrollArrow dir="right" />
        </div>
      </div>
      <TabBar />
    </section>
  );
}

export default function App() {
  return (
    <div className="flex min-h-screen items-start overflow-hidden bg-white font-['Open_Sans','Noto_Sans',sans-serif] text-[11px] leading-4 text-black">
      <Defs />
      <Navigator />
      <main className="min-w-0 flex-1">
        <ModelView />
        <ResultsPanel />
      </main>
    </div>
  );
}
